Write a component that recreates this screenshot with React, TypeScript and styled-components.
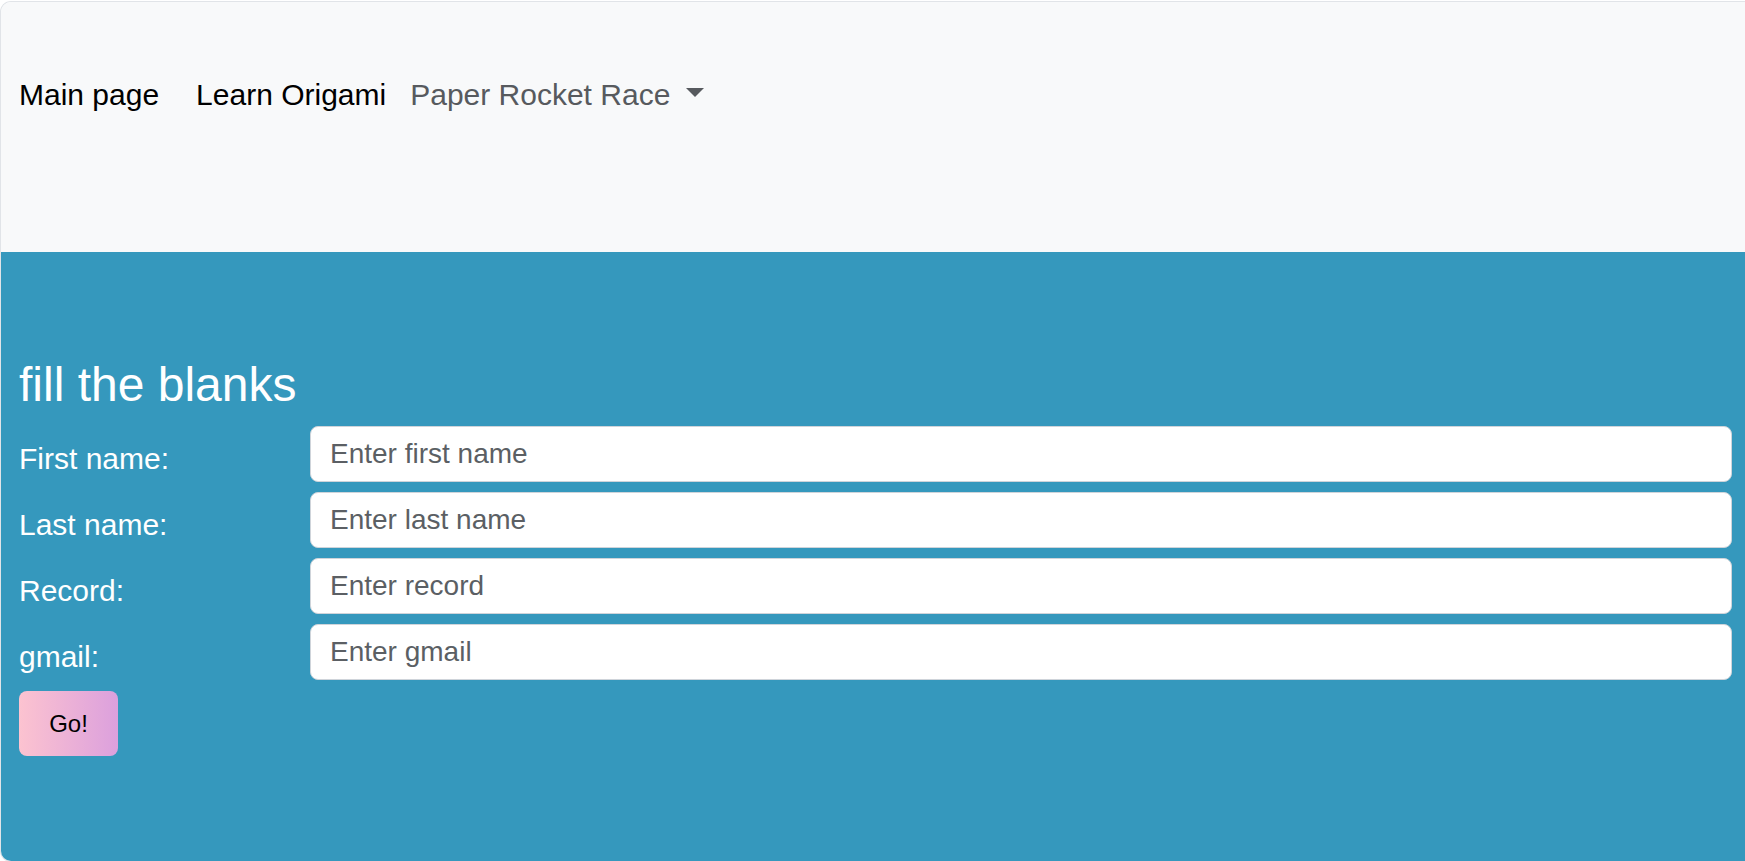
import React from "react";
import styled, { createGlobalStyle } from "styled-components";

const GlobalStyle = createGlobalStyle`
  html, body {
    margin: 0;
    padding: 0;
    background: #ffffff;
    overflow: hidden;
  }
  body {
    font-family: "Liberation Sans", Arial, sans-serif;
  }
  * { box-sizing: border-box; }
`;

const Frame = styled.div`
  margin-top: 1px;
  border: 1px solid #e1e4e8;
  border-right: none;
  border-radius: 11px 0 0 11px;
  overflow: hidden;
  display: flex;
  flex-direction: column;
`;

const NavBar = styled.nav`
  background: #f8f9fa;
  height: 250px;
  padding: 70px 18px 0;
  display: flex;
  align-items: flex-start;
`;

const NavLink = styled.a<{ $muted?: boolean; $space: number }>`
  font-size: 30px;
  line-height: 45px;
  color: ${(p) => (p.$muted ? "#575a5e" : "#000000")};
  text-decoration: none;
  margin-right: ${(p) => p.$space}px;
  display: inline-flex;
  align-items: center;
  white-space: nowrap;
`;

const Caret = styled.span`
  display: inline-block;
  margin-left: 16px;
  width: 0;
  height: 0;
  border-top: 9px solid #575a5e;
  border-left: 9px solid transparent;
  border-right: 9px solid transparent;
  transform: translateY(-2px);
`;

const Hero = styled.section`
  background: #3598bd;
  padding: 104px 13px 105px 18px;
  display: flex;
  flex-direction: column;
`;

const Heading = styled.h2`
  margin: 0 0 12px;
  font-size: 48px;
  line-height: 58px;
  font-weight: 400;
  color: #ffffff;
`;

const FormGrid = styled.form`
  display: grid;
  grid-template-columns: 291px 1fr;
  row-gap: 10px;
`;

const Label = styled.label`
  font-size: 30px;
  line-height: 36px;
  color: #ffffff;
  padding-top: 14.5px;
  white-space: nowrap;
`;

const Field = styled.input`
  height: 56px;
  width: 100%;
  border: 1px solid #cfd4da;
  border-radius: 8px;
  background: #ffffff;
  padding: 0 19px;
  font-family: "Liberation Sans", Arial, sans-serif;
  font-size: 28px;
  color: #212529;
  outline: none;
  &::placeholder {
    color: #5b5f64;
    opacity: 1;
  }
`;

const GoButton = styled.button`
  margin-top: 11px;
  width: 99px;
  height: 65px;
  border: none;
  border-radius: 8px;
  background: linear-gradient(to right, #fcc3d0, #dca0dd);
  font-family: "Liberation Sans", Arial, sans-serif;
  font-size: 24px;
  color: #000000;
  cursor: pointer;
  align-self: flex-start;
`;

const fields = [
  { id: "first", label: "First name:", placeholder: "Enter first name" },
  { id: "last", label: "Last name:", placeholder: "Enter last name" },
  { id: "record", label: "Record:", placeholder: "Enter record" },
  { id: "gmail", label: "gmail:", placeholder: "Enter gmail" },
];

export default function App() {
  return (
    <>
      <GlobalStyle />
      <Frame>
        <NavBar>
          <NavLink href="#" $space={37}>Main page</NavLink>
          <NavLink href="#" $space={24}>Learn Origami</NavLink>
          <NavLink href="#" $muted $space={0}>
            Paper Rocket Race
            <Caret />
          </NavLink>
        </NavBar>
        <Hero>
          <Heading>fill the blanks</Heading>
          <FormGrid onSubmit={(e) => e.preventDefault()}>
            {fields.map((f) => (
              <React.Fragment key={f.id}>
                <Label htmlFor={f.id}>{f.label}</Label>
                <Field id={f.id} placeholder={f.placeholder} />
              </React.Fragment>
            ))}
          </FormGrid>
          <GoButton type="button">Go!</GoButton>
        </Hero>
      </Frame>
    </>
  );
}
